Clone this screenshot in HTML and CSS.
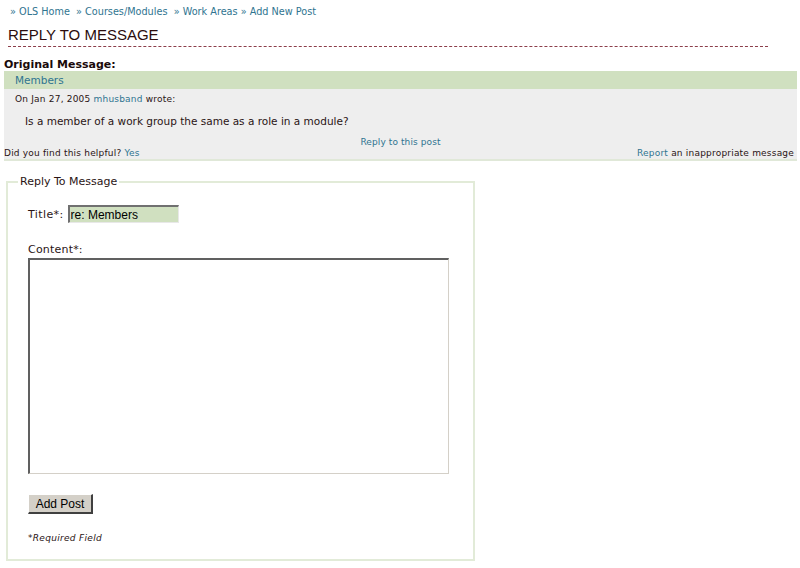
FILE: index.html
```html
<!DOCTYPE html>
<html>
<head>
<meta charset="utf-8">
<link rel="stylesheet" href="styles.css">
</head>
<body>
<div class="crumbs">
  <a href="#">» OLS Home</a>&nbsp; <a href="#">» Courses/Modules</a>&nbsp; <a href="#">» Work Areas</a> <a href="#">» Add New Post</a>
</div>
<h1 class="page-title">REPLY TO MESSAGE</h1>
<div class="original">
  <div class="orig-label">Original Message:</div>
  <div class="msg">
    <div class="msg-title"><a href="#">Members</a></div>
    <div class="msg-body">
      <div class="msg-meta">On Jan 27, 2005 <a href="#">mhusband</a> wrote:</div>
      <div class="msg-text">Is a member of a work group the same as a role in a module?</div>
      <div class="msg-reply"><a href="#">Reply to this post</a></div>
      <div class="msg-foot">
        <span>Did you find this helpful? <a href="#">Yes</a></span>
        <span><a href="#">Report</a> an inappropriate message</span>
      </div>
    </div>
  </div>
</div>
<fieldset class="reply">
  <legend>Reply To Message</legend>
  <div class="row-title">
    <label>Title*:</label>
    <input class="title-input" type="text" value="re: Members">
  </div>
  <div class="content-label">Content*:</div>
  <textarea class="content"></textarea>
  <div class="actions"><button class="btn">Add Post</button></div>
  <div class="required">*Required Field</div>
</fieldset>
</body>
</html>
```
FILE: styles.css
```css
html, body { margin: 0; padding: 0; background: #fff; }
body {
  font-family: "DejaVu Sans", Verdana, sans-serif;
  font-size: 11px;
  color: #2a1414;
}
a { color: #2f7490; text-decoration: none; }

.crumbs {
  padding: 5px 0 0 10px;
  height: 14px;
  line-height: 14px;
  font-size: 9.7px;
}
.crumbs a { color: #2f7490; }

.page-title {
  margin: 7px 0 0 8px;
  width: 760px;
  font-family: "Liberation Sans", Arial, sans-serif;
  font-weight: normal;
  font-size: 15px;
  line-height: 18px;
  color: #2b0d0d;
  padding-bottom: 2px;
  border-bottom: 1px dashed #8c3e4a;
}

.original { margin: 11px 3px 0 4px; }
.orig-label {
  font-weight: bold;
  font-size: 11px;
  line-height: 13px;
  color: #1a0a0a;
}
.msg { background: #eeeeee; border-bottom: 2px solid #e0e8d8; }
.msg-title {
  background: #d0e0c0;
  height: 18px;
  line-height: 18px;
  padding-left: 11px;
  font-size: 10.5px;
}
.msg-meta {
  padding: 4px 0 0 11px;
  font-size: 9px;
  line-height: 12px;
  letter-spacing: 0.2px;
}
.msg-text {
  padding: 9px 0 0 21px;
  font-size: 10.5px;
  line-height: 14px;
}
.msg-reply {
  text-align: center;
  padding-top: 8px;
  font-size: 9px;
  line-height: 12px;
  letter-spacing: 0.1px;
}
.msg-foot {
  display: flex;
  justify-content: space-between;
  font-size: 9px;
  line-height: 11px;
  letter-spacing: 0.2px;
  padding: 0 3px 0 0;
}

.reply {
  margin: 14px 0 0 6px;
  width: 433px;
  padding: 10px 12px 15px 20px;
  border: 2px solid #e2ebd8;
}
.reply legend {
  padding: 0 2px;
  margin-left: -10px;
  font-size: 11px;
  color: #2a1414;
}
.row-title {
  display: flex;
  align-items: center;
  gap: 4px;
  margin-top: 7px;
}
.row-title label { font-size: 11px; letter-spacing: 0.4px; }
.title-input {
  width: 106px;
  height: 15px;
  padding: 0 1px;
  margin: 0;
  font-family: "Liberation Sans", Arial, sans-serif;
  font-size: 12px;
  background: #d0e0c0;
  border-style: solid;
  border-color: #707070 #e8e8e8 #e8e8e8 #707070;
  border-width: 2px 1px 1px 2px;
  color: #000;
}
.content-label { margin-top: 20px; font-size: 11px; line-height: 13px; letter-spacing: 0.2px; }
.content {
  display: block;
  margin-top: 2px;
  width: 418px;
  height: 213px;
  padding: 0;
  resize: none;
  background: #fff;
  border-style: solid;
  border-width: 2px 1px 1px 2px;
  border-color: #606060 #d4d0c8 #d4d0c8 #606060;
}
.actions { margin-top: 20px; }
.btn {
  width: 65px;
  height: 20px;
  padding: 0;
  font-family: "Liberation Sans", Arial, sans-serif;
  font-size: 12px;
  color: #000;
  background: #d4d0c8;
  border-style: solid;
  border-width: 1px 2px 2px 1px;
  border-color: #ffffff #404040 #404040 #ffffff;
}
.required {
  margin-top: 18px;
  font-size: 9px;
  font-style: italic;
  line-height: 12px;
  letter-spacing: 0.3px;
}
```
